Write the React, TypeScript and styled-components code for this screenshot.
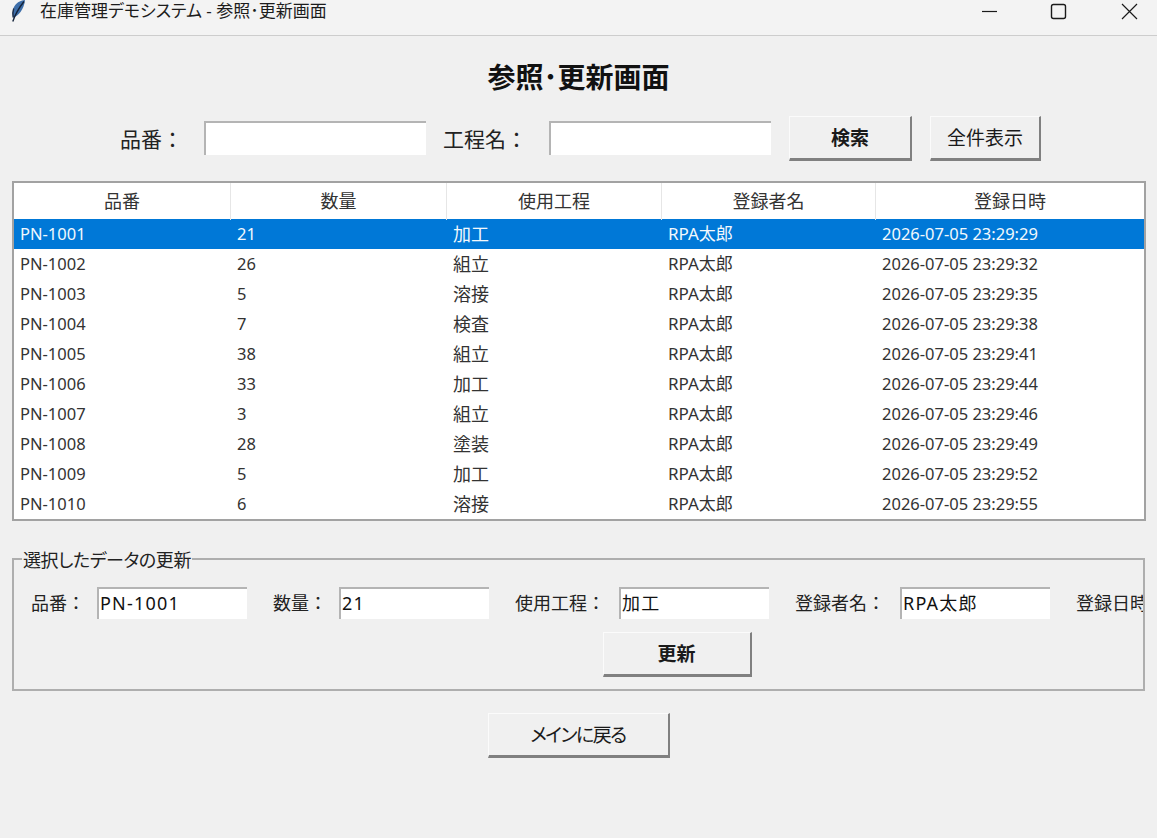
import styled, { createGlobalStyle } from 'styled-components';

const GlobalStyle = createGlobalStyle`
  html, body {
    margin: 0;
    padding: 0;
    background: #f0f0f0;
  }
  * {
    box-sizing: border-box;
  }
`;

const FONT = `"Noto Sans", "Noto Sans CJK JP", sans-serif`;

const StyledWindow = styled.div`
  width: 1157px;
  height: 838px;
  overflow: hidden;
  display: flex;
  flex-direction: column;
  background: #f0f0f0;
  font-family: ${FONT};
  color: #222;
`;

const StyledTitleBar = styled.div`
  height: 36px;
  flex-shrink: 0;
  display: flex;
  align-items: flex-start;
  background: #f3f3f3;
  border-bottom: 1px solid #cdcdcd;
`;

const StyledAppIcon = styled.svg`
  width: 16px;
  height: 24px;
  margin: 0 0 0 10px;
`;

const StyledTitleText = styled.div`
  margin-left: 14px;
  font-size: 17px;
  line-height: 22px;
  font-feature-settings: 'palt';
  color: #1c1c1c;
  flex-grow: 1;
`;

const StyledControls = styled.div`
  display: flex;
`;

const StyledControl = styled.svg`
  width: 71px;
  height: 22px;
  display: block;
`;

const StyledHeading = styled.h1`
  margin: 23px 0 0;
  height: 36px;
  font-size: 28px;
  line-height: 36px;
  font-weight: 700;
  text-align: center;
  color: #111;
`;

const StyledSearchRow = styled.div`
  margin-top: 21px;
  height: 46px;
  padding-left: 4px;
  display: flex;
  align-items: flex-start;
  justify-content: center;
`;

const StyledSearchLabel = styled.span<{ $gap?: number }>`
  font-size: 21px;
  line-height: 34px;
  margin-top: 6px;
  margin-left: ${({ $gap }) => $gap ?? 0}px;
  white-space: nowrap;
`;

const StyledInput = styled.div<{ $width: number; $height: number }>`
  flex-shrink: 0;
  width: ${({ $width }) => $width}px;
  height: ${({ $height }) => $height}px;
  background: #fff;
  border-top: 2px solid #b4b4b4;
  border-left: 2px solid #b4b4b4;
  padding-left: 1px;
  font-size: 18px;
  letter-spacing: 1.2px;
  line-height: 29px;
  color: #111;
  white-space: nowrap;
`;

const StyledSearchInput = styled(StyledInput)<{ $gap: number }>`
  margin: 5px 0 0 ${({ $gap }) => $gap}px;
`;

const StyledButton = styled.button<{ $width: number; $bold?: boolean }>`
  flex-shrink: 0;
  width: ${({ $width }) => $width}px;
  height: 45px;
  padding: 0;
  background: #f0f0f0;
  border-style: solid;
  border-width: 1px 2px 3px 1px;
  border-color: #fbfbfb #808080 #808080 #fbfbfb;
  font-family: ${FONT};
  font-size: 19px;
  line-height: 26px;
  font-weight: ${({ $bold }) => ($bold ? 700 : 400)};
  color: #1a1a1a;
`;

const StyledBackButton = styled(StyledButton)`
  font-feature-settings: 'palt';
  letter-spacing: -1.5px;
`;

const StyledSearchButton = styled(StyledButton)<{ $gap: number }>`
  margin-left: ${({ $gap }) => $gap}px;
`;

const StyledTable = styled.div`
  margin: 19px 11px 0 12px;
  height: 340px;
  flex-shrink: 0;
  background: #fff;
  border: 2px solid #a2a2a2;
  overflow: hidden;
`;

const StyledRow = styled.div<{ $selected?: boolean }>`
  display: grid;
  grid-template-columns: 217px 216px 215px 214px 1fr;
  height: 30px;
  font-size: 16.5px;
  line-height: 30px;
  background: ${({ $selected }) => ($selected ? '#0078d7' : 'transparent')};
  color: ${({ $selected }) => ($selected ? '#f2f8fd' : '#333')};
`;

const StyledHeaderRow = styled(StyledRow)`
  height: 36px;
  font-size: 18px;
  line-height: 37px;
`;

const StyledHeaderCell = styled.div`
  text-align: center;
  border-right: 1px solid #e6e6e6;
  color: #333;
  &:last-child {
    border-right: 0;
  }
`;

const StyledCell = styled.div`
  padding-left: 6px;
  white-space: nowrap;
`;

const StyledCjk = styled.span`
  font-size: 18px;
`;

const StyledOperator = styled.span`
  font-size: 17px;
`;

const StyledGroup = styled.fieldset`
  margin: 26px 0 0 12px;
  padding: 0;
  width: 1133px;
  height: 144px;
  flex-shrink: 0;
  min-width: 0;
  border: 2px solid #aeaeae;
  overflow: hidden;
`;

const StyledLegend = styled.legend`
  margin-left: 8px;
  padding: 2px 1px 0;
  font-size: 18px;
  line-height: 22px;
  letter-spacing: -0.4px;
  font-feature-settings: 'palt';
  color: #222;
`;

const StyledGroupBody = styled.div`
  width: 1326px;
`;

const StyledFieldRow = styled.div`
  display: flex;
  align-items: flex-start;
  height: 61px;
  padding: 16px 0 0 17px;
`;

const StyledField = styled.div`
  display: flex;
  align-items: flex-start;
  margin-right: 26px;
  flex-shrink: 0;
`;

const StyledFieldLabel = styled.span<{ $gap: number }>`
  font-size: 18px;
  line-height: 33px;
  margin-right: ${({ $gap }) => $gap}px;
  white-space: nowrap;
`;

const StyledCenter = styled.div`
  display: flex;
  justify-content: center;
`;

const StyledBackLine = styled(StyledCenter)`
  margin-top: 22px;
`;

const COLUMNS = ['品番', '数量', '使用工程', '登録者名', '登録日時'];

const ROWS = [
  ['PN-1001', '21', '加工', '23:29:29'],
  ['PN-1002', '26', '組立', '23:29:32'],
  ['PN-1003', '5', '溶接', '23:29:35'],
  ['PN-1004', '7', '検査', '23:29:38'],
  ['PN-1005', '38', '組立', '23:29:41'],
  ['PN-1006', '33', '加工', '23:29:44'],
  ['PN-1007', '3', '組立', '23:29:46'],
  ['PN-1008', '28', '塗装', '23:29:49'],
  ['PN-1009', '5', '加工', '23:29:52'],
  ['PN-1010', '6', '溶接', '23:29:55'],
];

const FIELDS = [
  { label: '品番：', value: 'PN-1001', gap: 12 },
  { label: '数量：', value: '21', gap: 12 },
  { label: '使用工程：', value: '加工', gap: 14 },
  { label: '登録者名：', value: 'RPA太郎', gap: 15 },
  { label: '登録日時：', value: '', gap: 15 },
];

export default function App(): JSX.Element {
  return (
    <>
      <GlobalStyle />
      <StyledWindow>
        <StyledTitleBar>
          <StyledAppIcon viewBox="0 0 16 24">
            <path d="M15 0C10 .5 5.500 3 3.500 8c-1.200 3.200-1.200 6.500-.5 9.500C8.500 16 14 9.500 15 0Z" fill="#3d6ea9" />
            <path d="M14 1.500C10 6.500 6 12 2.800 21.500" stroke="#14233a" strokeWidth="1.400" fill="none" />
            <path d="M3.700 8.500c-1 3-1 6-.5 9" stroke="#1d2c45" strokeWidth="1.400" fill="none" />
          </StyledAppIcon>
          <StyledTitleText>在庫管理デモシステム - 参照･更新画面</StyledTitleText>
          <StyledControls>
            <StyledControl viewBox="0 0 71 22">
              <path d="M38 11.500H53" stroke="#1a1a1a" strokeWidth="1.200" />
            </StyledControl>
            <StyledControl viewBox="0 0 71 22">
              <rect x="36.500" y="4.500" width="14" height="14" rx="2" fill="none" stroke="#1a1a1a" strokeWidth="1.400" />
            </StyledControl>
            <StyledControl viewBox="0 0 71 22">
              <path d="M36 4L51 19M51 4L36 19" stroke="#1a1a1a" strokeWidth="1.200" />
            </StyledControl>
          </StyledControls>
        </StyledTitleBar>

        <StyledHeading>参照･更新画面</StyledHeading>

        <StyledSearchRow>
          <StyledSearchLabel>品番：</StyledSearchLabel>
          <StyledSearchInput $width={222} $height={34} $gap={21} />
          <StyledSearchLabel $gap={17}>工程名：</StyledSearchLabel>
          <StyledSearchInput $width={222} $height={34} $gap={22} />
          <StyledSearchButton $width={123} $gap={18} $bold>検索</StyledSearchButton>
          <StyledSearchButton $width={111} $gap={18}>全件表示</StyledSearchButton>
        </StyledSearchRow>

        <StyledTable>
          <StyledHeaderRow>
            {COLUMNS.map((column) => (
              <StyledHeaderCell key={column}>{column}</StyledHeaderCell>
            ))}
          </StyledHeaderRow>
          {ROWS.map(([code, qty, process, time], index) => (
            <StyledRow key={code} $selected={index === 0}>
              <StyledCell>{code}</StyledCell>
              <StyledCell>{qty}</StyledCell>
              <StyledCell><StyledCjk>{process}</StyledCjk></StyledCell>
              <StyledCell><StyledOperator>RPA太郎</StyledOperator></StyledCell>
              <StyledCell>2026-07-05 {time}</StyledCell>
            </StyledRow>
          ))}
        </StyledTable>

        <StyledGroup>
          <StyledLegend>選択したデータの更新</StyledLegend>
          <StyledGroupBody>
            <StyledFieldRow>
              {FIELDS.map((field) => (
                <StyledField key={field.label}>
                  <StyledFieldLabel $gap={field.gap}>{field.label}</StyledFieldLabel>
                  <StyledInput $width={150} $height={32}>{field.value}</StyledInput>
                </StyledField>
              ))}
            </StyledFieldRow>
            <StyledCenter>
              <StyledButton $width={149} $bold>更新</StyledButton>
            </StyledCenter>
          </StyledGroupBody>
        </StyledGroup>

        <StyledBackLine>
          <StyledBackButton $width={182}>メインに戻る</StyledBackButton>
        </StyledBackLine>
      </StyledWindow>
    </>
  );
}
